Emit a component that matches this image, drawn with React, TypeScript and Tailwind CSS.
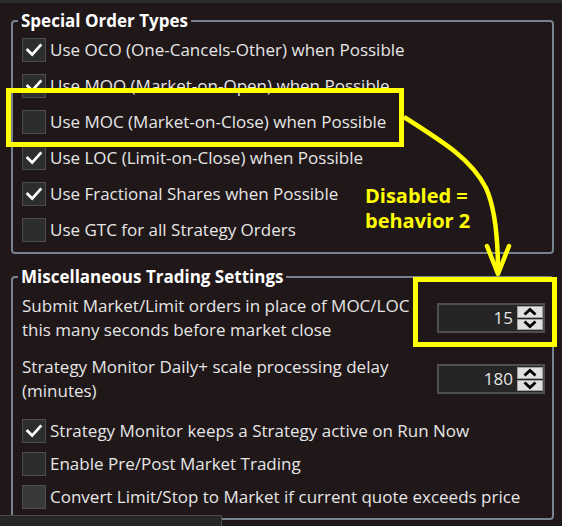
const Check = ({ checked, dim }: { checked?: boolean; dim?: boolean }) => (
  <div
    className={
      "flex h-[24px] w-[24px] shrink-0 items-center justify-center border border-[#4d4d4d] " +
      (dim ? "bg-[#383838]" : "bg-[#2d2d2d]")
    }
  >
    {checked && (
      <svg width="24" height="24" viewBox="0 0 24 24">
        <path d="M5 12 L10 17 L19 7" fill="none" stroke="#ffffff" strokeWidth="3" strokeLinecap="square" />
      </svg>
    )}
  </div>
);

const Row = ({ label, checked, dim, h }: { label: string; checked?: boolean; dim?: boolean; h: string }) => (
  <div className={"flex items-center gap-[4px] " + h}>
    <Check checked={checked} dim={dim} />
    <span className="whitespace-nowrap">{label}</span>
  </div>
);

const Spin = ({ value }: { value: string }) => (
  <div className="flex h-[30px] w-[108px] shrink-0 border-2 border-[#4f4f4f] bg-[#252525]">
    <div className="flex flex-1 items-center justify-end pr-[4px] text-[17px] text-[#e4e4e4]">{value}</div>
    <div className="flex w-[26px] flex-col gap-[1px] py-[1px]">
      <div className="flex flex-1 items-center justify-center border border-[#a0a0a0] bg-[#e0e0e0]">
        <svg width="14" height="9" viewBox="0 0 14 9">
          <polyline points="1.5,7.5 7,2.5 12.5,7.5" fill="none" stroke="#000" strokeWidth="2.8" />
        </svg>
      </div>
      <div className="flex flex-1 items-center justify-center border border-[#a0a0a0] bg-[#e0e0e0]">
        <svg width="14" height="9" viewBox="0 0 14 9">
          <polyline points="1.5,1.5 7,6.5 12.5,1.5" fill="none" stroke="#000" strokeWidth="2.8" />
        </svg>
      </div>
    </div>
  </div>
);

export default function App() {
  return (
    <div className="relative h-[526px] w-[562px] overflow-hidden bg-[#1f1718] font-['Open_Sans','Noto_Sans',sans-serif] text-[17px] text-[#e6e6e6]">
      <div className="h-[3px] bg-[#2b2b2b]" />
      <div className="pl-[11px] pr-[8px] pt-[7px]">
        <fieldset className="rounded-[4px] border-2 border-[#76828f] pb-[4px] pl-[9px] pr-[7px]">
          <legend className="ml-[-4px] px-[3px] text-[17px] font-bold leading-[22px] text-white">Special Order Types</legend>
          <Row h="h-[36px]" checked label="Use OCO (One-Cancels-Other) when Possible" />
          <Row h="h-[36px]" checked label="Use MOO (Market-on-Open) when Possible" />
          <Row h="h-[36px]" label="Use MOC (Market-on-Close) when Possible" />
          <Row h="h-[36px]" checked label="Use LOC (Limit-on-Close) when Possible" />
          <Row h="h-[36px]" checked label="Use Fractional Shares when Possible" />
          <Row h="h-[36px]" label="Use GTC for all Strategy Orders" />
        </fieldset>

        <fieldset className="mt-[12px] rounded-[4px] border-2 border-[#76828f] pb-[5px] pl-[9px] pr-[7px]">
          <legend className="ml-[-4px] px-[3px] text-[17px] font-bold leading-[22px] text-white">
            Miscellaneous Trading Settings
          </legend>
          <div className="mt-[6px] flex items-center justify-between leading-[24px]">
            <div className="whitespace-nowrap">
              Submit Market/Limit orders in place of MOC/LOC
              <br />
              this many seconds before market close
            </div>
            <Spin value="15" />
          </div>
          <div className="mt-[13px] flex items-center justify-between leading-[24px]">
            <div className="whitespace-nowrap">
              Strategy Monitor Daily+ scale processing delay
              <br />
              (minutes)
            </div>
            <Spin value="180" />
          </div>
          <div className="mt-[12px]">
            <Row h="h-[32px]" checked label="Strategy Monitor keeps a Strategy active on Run Now" />
            <Row h="h-[33px]" label="Enable Pre/Post Market Trading" />
            <Row h="h-[33px]" dim label="Convert Limit/Stop to Market if current quote exceeds price" />
          </div>
        </fieldset>
      </div>

      {/* annotation overlay */}
      <svg className="pointer-events-none absolute inset-0" width="562" height="526" viewBox="0 0 562 526">
        <rect x="8.5" y="90.5" width="393" height="54" fill="none" stroke="#ffff00" strokeWidth="5" />
        <rect x="415.5" y="279.5" width="139" height="65" fill="none" stroke="#ffff00" strokeWidth="5" />
        <path
          d="M404 117 C445 143 472 160 486 188 C496 210 498 240 498 272"
          fill="none"
          stroke="#ffff00"
          strokeWidth="4.5"
        />
        <polyline points="487,246 498,274 509,246" fill="none" stroke="#ffff00" strokeWidth="4.5" strokeLinecap="round" strokeLinejoin="round" />
      </svg>
      <div className="absolute left-[365px] top-[183px] text-[20px] font-bold leading-[25px] text-[#ffff00]">
        Disabled =
        <br />
        behavior 2
      </div>

      <div className="absolute bottom-0 left-0 h-[11px] w-[222px] border-r border-t border-[#4a4a4a] bg-[#262626]" />
    </div>
  );
}
